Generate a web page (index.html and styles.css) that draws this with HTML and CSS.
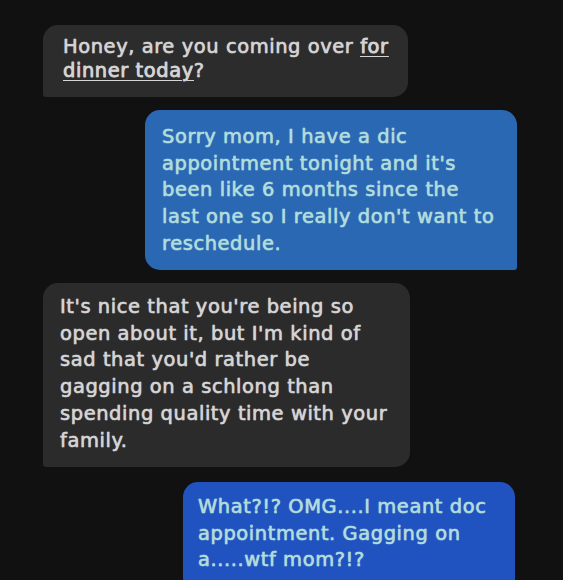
FILE: index.html
```html
<!DOCTYPE html>
<html>
<head>
<meta charset="utf-8">
<link rel="stylesheet" href="styles.css">
</head>
<body>
<div class="thread">
  <div class="bubble in b1">Honey, are you coming over <span class="link">for</span><br><span class="link">dinner today</span>?</div>
  <div class="bubble out b2">Sorry mom, I have a dic<br>appointment tonight and it's<br>been like 6 months since the<br>last one so I really don't want to<br>reschedule.</div>
  <div class="bubble in b3">It's nice that you're being so<br>open about it, but I'm kind of<br>sad that you'd rather be<br>gagging on a schlong than<br>spending quality time with your<br>family.</div>
  <div class="bubble out b4">What?!? OMG....I meant doc<br>appointment. Gagging on<br>a.....wtf mom?!?</div>
</div>
</body>
</html>
```
FILE: styles.css
```css
html, body {
  margin: 0;
  padding: 0;
  background: #111111;
  height: 100%;
  overflow: hidden;
}
.thread {
  display: flex;
  flex-direction: column;
  padding: 25px 46px 0 43px;
  font-family: "DejaVu Sans", Verdana, sans-serif;
  font-size: 19.5px;
  letter-spacing: 0.55px;
  line-height: 26.7px;
  white-space: nowrap;
}
.bubble {
  border-radius: 15px;
  box-sizing: border-box;
  text-shadow: 0 0 1px currentColor;
  -webkit-text-stroke: 0.35px currentColor;
}
.in {
  align-self: flex-start;
  background: #2c2c2c;
  color: #d4d4d4;
  border-bottom-left-radius: 3px;
}
.out {
  align-self: flex-end;
  color: #b0dcdc;
  border-bottom-right-radius: 3px;
}
.b1 {
  width: 365px;
  height: 72px;
  padding: 10px 10px 0 20px;
  line-height: 24px;
}
.link {
  text-decoration: underline;
  text-underline-offset: 3px;
  text-decoration-thickness: 1px;
}
.b2 {
  margin-top: 13px;
  width: 372px;
  height: 160px;
  padding: 14px 10px 0 17px;
  background: #2a68b4;
}
.b3 {
  margin-top: 13px;
  width: 367px;
  height: 184px;
  padding: 11px 10px 0 17px;
  background: #2b2b2b;
}
.b4 {
  margin-top: 15px;
  margin-right: 2px;
  width: 332px;
  height: 110px;
  padding: 12px 10px 0 15px;
  background: #2153c0;
}
```
